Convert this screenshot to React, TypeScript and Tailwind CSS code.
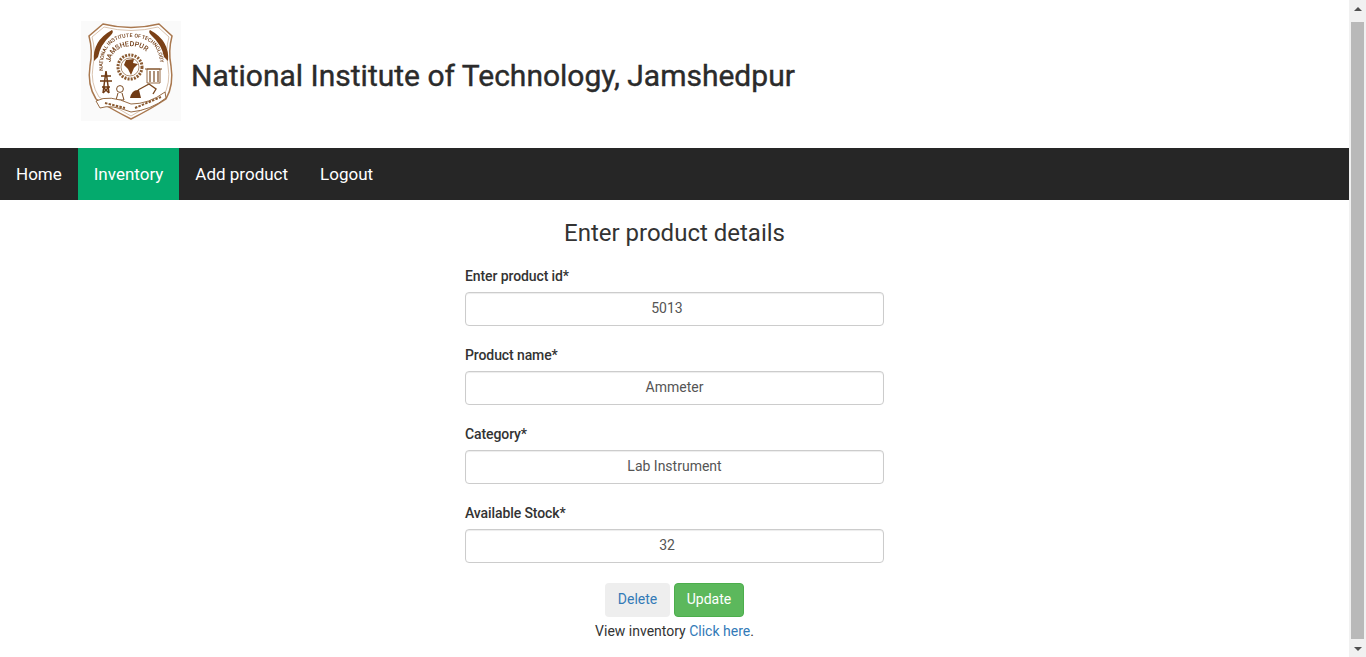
const NAV_LINKS = ["Home", "Inventory", "Add product", "Logout"];

const FIELDS = [
  { label: "Enter product id*", value: "5013", numeric: true },
  { label: "Product name*", value: "Ammeter", numeric: false },
  { label: "Category*", value: "Lab Instrument", numeric: false },
  { label: "Available Stock*", value: "32", numeric: true },
];

function Logo() {
  return (
    <svg viewBox="0 0 100 100" className="h-[100px] w-[100px] bg-[#fafafa]" aria-label="NIT Jamshedpur emblem">
      <defs>
        <filter id="soft">
          <feGaussianBlur stdDeviation="0.3" />
        </filter>
      </defs>
      <g filter="url(#soft)">
        {/* shield outline */}
        <path
          d="M22 3 Q50 10 78 3 L91 15 Q87 30 90 45 Q93 64 85 78 Q70 88 50 98 Q30 88 15 78 Q6 64 9 45 Q12 30 8 15 Z"
          fill="#fff"
          stroke="#a9784f"
          strokeWidth="1.5"
        />
        <path
          d="M23 6 Q50 13 77 6 L88 16 Q84 30 87 45 Q90 62 82 76 Q68 85 50 95 Q32 85 18 76 Q9 62 12 45 Q15 30 11 16 Z"
          fill="none"
          stroke="#c9a98c"
          strokeWidth="0.7"
        />
        {/* side leaves */}
        <path d="M13 40 Q11 20 31 9 Q33 11 30 14 Q19 24 17 36 Z" fill="#7a3f12" />
        <path d="M87 40 Q89 20 69 9 Q67 11 70 14 Q81 24 83 36 Z" fill="#7a3f12" />
        {/* one string on two arcs: outer row, then inner row */}
        <path id="name-arcs" d="M22 50 Q20 17 50 16 Q80 17 79 46 M29 44 Q30 26 50 25 Q68 26 71 42" fill="none" />
        <text fontFamily="Roboto, sans-serif" fontSize="5.2" fill="#6f3a12" fontWeight="500">
          <textPath href="#name-arcs">
            NATIONAL INSTITUTE OF TECHNOLOGY
            <tspan fontSize="7" dx="6">JAMSHEDPUR</tspan>
          </textPath>
        </text>
        {/* gear with map */}
        <circle cx="49" cy="46" r="12" fill="none" stroke="#8a5a30" strokeWidth="3" strokeDasharray="2 1.2" />
        <circle cx="49" cy="46" r="9" fill="#fff" stroke="#8a5a30" strokeWidth="0.7" />
        <path d="M45 39 L53 38 L52 42 L57 43 L53 47 L50 54 L47 48 L43 44 Z" fill="#7a3f12" />
        {/* pylon */}
        <path
          d="M25 50 L22 72 M25 50 L28 72 M20 55 H30 M19 60 H31 M21 66 H29 M22 72 L28 66 M28 72 L22 66"
          stroke="#6f3a12"
          strokeWidth="1.5"
          fill="none"
        />
        {/* building */}
        <path d="M66 48 H79 V62 H66 Z" fill="#fff" stroke="#8a5a30" strokeWidth="0.9" />
        <path d="M64 48 H81 M69 50 V61 M73 50 V61 M77 50 V61" stroke="#7a4a22" strokeWidth="1.2" />
        {/* flask and excavator */}
        <circle cx="39" cy="68" r="3.4" fill="none" stroke="#7a4a22" strokeWidth="1" />
        <path d="M37 72 L35 79 H43 L41 72" fill="none" stroke="#7a4a22" strokeWidth="1" />
        <path d="M49 77 Q51 68 58 69 L60 77 Z" fill="#6f3a12" />
        <path d="M57 69 L68 63 L75 68 L72 73" fill="none" stroke="#7a4a22" strokeWidth="1.4" />
        {/* motto ribbon */}
        <path d="M15 80 Q28 73 50 83 Q68 83 84 71 L85 77 Q70 89 50 91 Q30 83 19 87 Z" fill="#fff" stroke="#8a5a30" strokeWidth="0.9" />
        <path d="M24 82 L44 87 M54 87 L80 76" stroke="#8a5a30" strokeWidth="2" strokeDasharray="2.5 1.2" />
      </g>
    </svg>
  );
}

function Scrollbar() {
  return (
    <div className="flex h-full w-[17px] shrink-0 flex-col items-center bg-[#f1f1f1]">
      <div className="flex h-[17px] w-full items-center justify-center">
        <span className="h-0 w-0 border-x-[4px] border-b-[4px] border-x-transparent border-b-[#505050]" />
      </div>
      <div className="mb-px mt-[5px] w-[13px] flex-1 bg-[#b9b9b9]" />
      <div className="flex h-[17px] w-full items-center justify-center">
        <span className="h-0 w-0 border-x-[4px] border-t-[4px] border-x-transparent border-t-[#505050]" />
      </div>
    </div>
  );
}

export default function App() {
  return (
    <div className="flex h-screen overflow-hidden bg-white font-['Roboto',sans-serif] text-[14px] text-[#333]">
      <main className="min-w-0 flex-1">
        {/* Header */}
        <header className="flex h-[148px] items-start pl-[81px] pt-[21px]">
          <Logo />
          <h1 className="ml-[10px] mt-[34px] text-[30px] font-normal leading-[42px] text-[#2b2b2b] [-webkit-text-stroke:0.4px_#2b2b2b]">
            National Institute of Technology, Jamshedpur
          </h1>
        </header>

        {/* Nav */}
        <nav className="flex h-[52px] bg-[#262626] text-[17px] text-white">
          {NAV_LINKS.map((link) => (
            <a
              key={link}
              href="#"
              className={`flex items-center px-4 pt-px ${link === "Inventory" ? "bg-[#04aa6d]" : ""}`}
            >
              {link}
            </a>
          ))}
        </nav>

        {/* Form */}
        <section className="mx-auto w-[419px] pt-[16px]">
          <h2 className="mb-[16px] text-center text-[24px] leading-[34px] text-[#333]">Enter product details</h2>
          {FIELDS.map((f) => (
            <div key={f.label} className="mb-[19px]">
              <label className="mb-[6px] block text-[14px] font-medium leading-[20px] tracking-[-0.1px] text-[#333]">{f.label}</label>
              <input
                readOnly
                value={f.value}
                className={`block h-[34px] w-full rounded-[4px] border border-[#ccc] bg-white pb-[2px] text-center text-[14px] text-[#555] shadow-[inset_0_1px_1px_rgba(0,0,0,0.075)] outline-none ${f.numeric ? "pl-3 pr-[27px]" : "px-3"}`}
              />
            </div>
          ))}
          <div className="mt-[20px] flex justify-center gap-[4px]">
            <button type="button" className="h-[34px] w-[65px] rounded-[4px] bg-[#eee] pb-[2px] text-[14px] text-[#337ab7]">
              Delete
            </button>
            <button type="button" className="h-[34px] w-[70px] rounded-[4px] border border-[#4cae4c] bg-[#5cb85c] pb-[2px] text-[14px] text-white">
              Update
            </button>
          </div>
          <p className="mt-[4px] text-center leading-[20px]">
            View inventory <a href="#" className="text-[#337ab7]">Click here</a>.
          </p>
        </section>
      </main>
      <Scrollbar />
    </div>
  );
}
